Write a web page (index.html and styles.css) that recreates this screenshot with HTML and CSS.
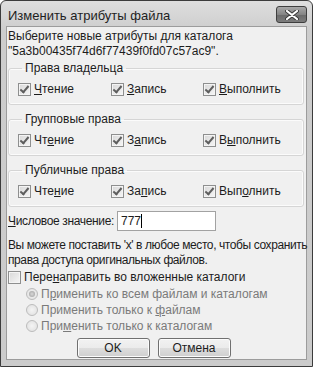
FILE: index.html
```html
<!DOCTYPE html>
<html lang="ru">
<head>
<meta charset="UTF-8">
<title>Изменить атрибуты файла</title>
<link rel="stylesheet" href="styles.css">
</head>
<body>

<div class="window">
    <div class="titlebar">
        <span class="title">Изменить атрибуты файла</span>
        <span class="close-btn">
            <svg width="14" height="10" viewBox="0 0 14 10">
                <path d="M2 1 L12 9 M12 1 L2 9" stroke="#3a3a3a" stroke-width="4" stroke-linecap="round"/>
                <path d="M2 1 L12 9 M12 1 L2 9" stroke="#ffffff" stroke-width="2.2" stroke-linecap="round"/>
            </svg>
        </span>
    </div>

    <div class="client">
        <p class="intro">Выберите новые атрибуты для каталога<br>"5a3b00435f74d6f77439f0fd07c57ac9".</p>

        <fieldset class="group">
            <legend>Права владельца</legend>
            <div class="row">
                <label class="check"><span class="box checked"></span><span><u>Ч</u>тение</span></label>
                <label class="check"><span class="box checked"></span><span><u>З</u>апись</span></label>
                <label class="check"><span class="box checked"></span><span><u>В</u>ыполнить</span></label>
            </div>
        </fieldset>

        <fieldset class="group">
            <legend>Групповые права</legend>
            <div class="row">
                <label class="check"><span class="box checked"></span><span>Чт<u>е</u>ние</span></label>
                <label class="check"><span class="box checked"></span><span>З<u>а</u>пись</span></label>
                <label class="check"><span class="box checked"></span><span>В<u>ы</u>полнить</span></label>
            </div>
        </fieldset>

        <fieldset class="group">
            <legend>Публичные права</legend>
            <div class="row">
                <label class="check"><span class="box checked"></span><span>Чте<u>н</u>ие</span></label>
                <label class="check"><span class="box checked"></span><span>За<u>п</u>ись</span></label>
                <label class="check"><span class="box checked"></span><span>Вып<u>о</u>лнить</span></label>
            </div>
        </fieldset>

        <div class="numeric">
            <span class="numeric-label"><u>Ч</u>исловое значение:</span>
            <div class="input">777<span class="caret"></span></div>
        </div>

        <p class="hint">Вы можете поставить 'x' в любое место, чтобы сохранить<br>права доступа оригинальных файлов.</p>

        <label class="check recurse"><span class="box"></span><span>Пере<u>н</u>аправить во вложенные каталоги</span></label>

        <div class="radios">
            <label class="radio"><span class="dot selected"></span><span>П<u>р</u>именить ко всем файлам и каталогам</span></label>
            <label class="radio"><span class="dot"></span><span>Применить только к <u>ф</u>айлам</span></label>
            <label class="radio"><span class="dot"></span><span>При<u>м</u>енить только к каталогам</span></label>
        </div>

        <div class="buttons">
            <button class="btn">OK</button>
            <button class="btn">Отмена</button>
        </div>
    </div>
</div>

</body>
</html>
```

FILE: styles.css
```css
body {
    margin: 0;
    font-family: "Liberation Sans", Arial, sans-serif;
    font-size: 12px;
    color: #1c1c1c;
}
.window {
    width: 313px;
    height: 367px;
    box-sizing: border-box;
    border: 1px solid #3c3c3c;
    border-radius: 6px 6px 0 0;
    background: linear-gradient(#dedede, #cdcdcd 30px, #cbcbcb);
    padding: 0 5px 6px 5px;
    display: flex;
    flex-direction: column;
}
.titlebar {
    height: 25px;
    flex-shrink: 0;
    display: flex;
    align-items: center;
    justify-content: space-between;
}
.title {
    font-size: 13px;
    color: #1e1e1e;
    padding-left: 2px;
    margin-top: 3px;
}
.close-btn {
    width: 29px;
    height: 15px;
    margin-top: 2px;
    border: 1px solid #3e3e3e;
    border-radius: 3px;
    background: linear-gradient(#a8a8a8, #858585 50%, #6a6a6a 51%, #7c7c7c);
    display: flex;
    align-items: center;
    justify-content: center;
}
.client {
    flex: 1;
    min-height: 0;
    border: 1px solid #9c9c9c;
    background: #f0f0f0;
    padding: 2px 2px 0 1px;
}
.intro {
    margin: 0;
    line-height: 15px;
}
.group {
    margin: 2px 0 0 0;
    padding: 5px 0 7px 9px;
    border: 1px solid #d5d5d5;
    border-radius: 3px;
    box-shadow: inset 0 0 0 1px #fbfbfb;
}
.group + .group {
    margin-top: 7px;
}
.group legend {
    padding: 0 3px;
    margin-left: 4px;
    line-height: 15px;
}
.row {
    display: grid;
    grid-template-columns: 93px 92px auto;
}
.check, .radio {
    display: flex;
    align-items: center;
    gap: 3px;
    line-height: 16px;
}
.box {
    width: 11px;
    height: 11px;
    border: 1px solid #8e8f8f;
    background: linear-gradient(135deg, #d8d8d8, #f6f6f6);
    box-shadow: inset 0 0 0 1px #f4f4f4;
    position: relative;
}
.box.checked::after {
    content: "";
    position: absolute;
    left: 3px;
    top: 0px;
    width: 3px;
    height: 7px;
    border: solid #5e5e5e;
    border-width: 0 2px 2px 0;
    transform: rotate(40deg);
}
.numeric {
    display: flex;
    align-items: center;
    margin-top: 4px;
}
.numeric-label {
    width: 109px;
    flex-shrink: 0;
    white-space: nowrap;
    letter-spacing: -0.35px;
}
.input {
    width: 94px;
    height: 18px;
    border: 1px solid #a2a2a2;
    background: #ffffff;
    padding-left: 3px;
    line-height: 18px;
    display: flex;
    align-items: center;
}
.caret {
    width: 1px;
    height: 14px;
    background: #000000;
}
.hint {
    margin: 7px 0 0 0;
    line-height: 15px;
    white-space: nowrap;
    letter-spacing: -0.4px;
}
.recurse {
    margin-top: 1px;
}
.radios {
    padding-left: 18px;
    margin-top: 1px;
}
.radio {
    color: #7a7a7a;
}
.dot {
    width: 10px;
    height: 10px;
    border: 1px solid #bcbcbc;
    border-radius: 50%;
    background: radial-gradient(#f4f4f4, #dedede);
    position: relative;
}
.dot.selected::after {
    content: "";
    position: absolute;
    left: 2px;
    top: 2px;
    width: 6px;
    height: 6px;
    border-radius: 50%;
    background: radial-gradient(#d8d8d8, #9c9c9c);
}
.buttons {
    display: flex;
    justify-content: center;
    gap: 8px;
    margin-top: 4px;
    padding-right: 5px;
}
.btn {
    width: 73px;
    height: 20px;
    font-family: inherit;
    font-size: 12px;
    color: #1c1c1c;
    border: 1px solid #707070;
    border-radius: 3px;
    background: linear-gradient(#f2f2f2, #ebebeb 50%, #dddddd 51%, #cfcfcf);
    box-shadow: inset 0 0 0 1px #fcfcfc;
    padding: 0;
}
```
